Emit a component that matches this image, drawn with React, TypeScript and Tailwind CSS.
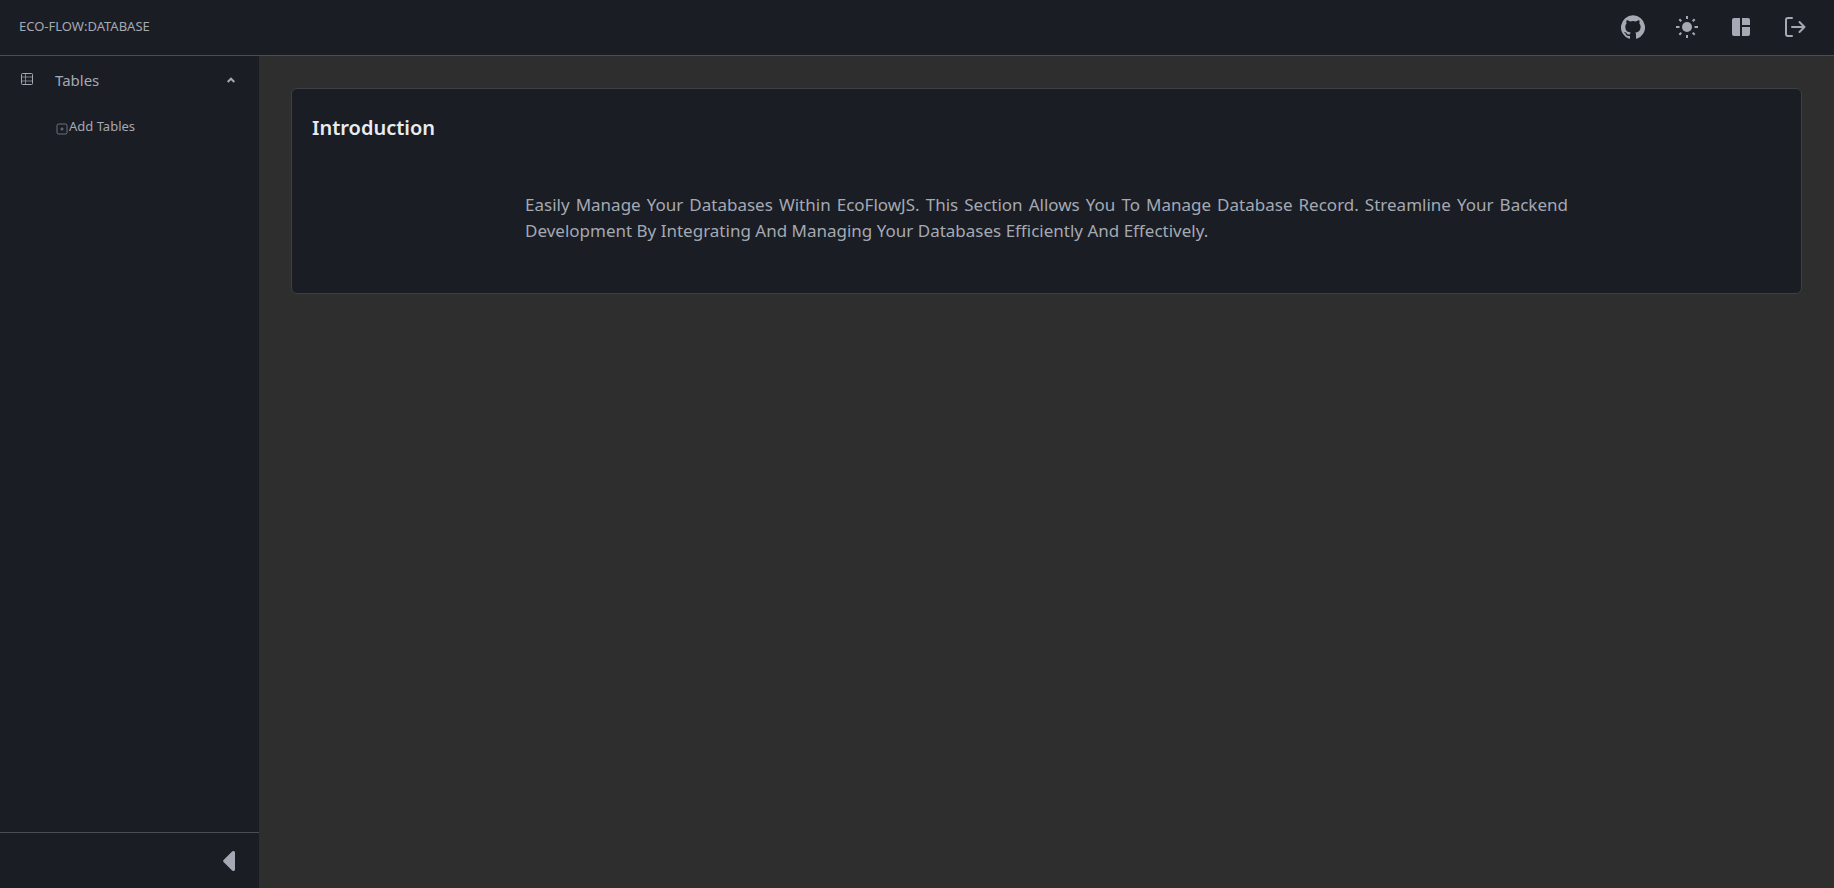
import { useState } from "react";
import type { ReactNode } from "react";

function GithubIcon() {
  return (
    <svg viewBox="0 0 24 24" className="size-6" fill="currentColor" aria-hidden="true">
      <path d="M12 .3a12 12 0 0 0-3.8 23.4c.6.1.8-.3.8-.6v-2.2c-3.3.7-4-1.4-4-1.4-.6-1.4-1.4-1.8-1.4-1.8-1-.7.1-.7.1-.7 1.2.1 1.9 1.2 1.9 1.2 1 1.8 2.8 1.3 3.5 1 0-.8.4-1.3.7-1.6-2.7-.3-5.500-1.300-5.500-6 0-1.200.5-2.300 1.300-3.100-.2-.4-.6-1.600 0-3.200 0 0 1-.3 3.400 1.200a11.500 11.500 0 0 1 6 0c2.300-1.500 3.300-1.200 3.300-1.200.6 1.600.2 2.800 0 3.200.9.8 1.300 1.900 1.300 3.200 0 4.600-2.800 5.600-5.500 5.900.5.4.9 1 .9 2.200v3.300c0 .3.1.7.8.6A12 12 0 0 0 12 .3" />
    </svg>
  );
}

function SunIcon() {
  return (
    <svg viewBox="0 0 24 24" className="size-6" fill="none" stroke="currentColor" strokeWidth="2" aria-hidden="true">
      <circle cx="12" cy="12" r="5" fill="currentColor" stroke="none" />
      <path d="M12 1v3M12 20v3M1 12h3.500M19.500 12H23M4.300 4.300l2 2M17.700 17.700l2 2M19.700 4.300l-2 2M6.300 17.700l-2 2" />
    </svg>
  );
}

function LayoutIcon() {
  return (
    <svg viewBox="0 0 24 24" className="size-6" fill="currentColor" aria-hidden="true">
      <path d="M11 21H5a2 2 0 0 1-2-2V5a2 2 0 0 1 2-2h6zM13 3h6a2 2 0 0 1 2 2v5h-8zM13 12h8v7a2 2 0 0 1-2 2h-6z" />
    </svg>
  );
}

function LogoutIcon() {
  return (
    <svg viewBox="0 0 24 24" className="size-6" fill="none" stroke="currentColor" strokeWidth="2" strokeLinecap="round" strokeLinejoin="round" aria-hidden="true">
      <path d="M9 3H5a2 2 0 0 0-2 2v14a2 2 0 0 0 2 2h4M9 12h12.500M16.500 7l5 5-5 5" />
    </svg>
  );
}

function TableIcon() {
  return (
    <svg viewBox="0 0 12 12" className="size-3" fill="none" stroke="currentColor" aria-hidden="true">
      <rect x=".5" y=".5" width="11" height="11" rx="1" />
      <path d="M4.500 .5v11M.5 4h11M.5 8h11" strokeOpacity=".7" />
    </svg>
  );
}

function AddBoxIcon() {
  return (
    <svg viewBox="0 0 12 12" className="size-3" fill="none" stroke="currentColor" aria-hidden="true">
      <rect x="1" y="1" width="10" height="10" rx="1.500" strokeOpacity=".6" />
      <path d="M6 4.300v3.400M4.300 6h3.400" strokeOpacity=".6" />
    </svg>
  );
}

function HeaderButton({ label, children }: { label: string; children: ReactNode }) {
  return (
    <button type="button" aria-label={label} className="flex size-6 items-center justify-center">
      {children}
    </button>
  );
}

export default function App() {
  const [open, setOpen] = useState(true);
  return (
    <div className="flex min-h-screen flex-col bg-[#2e2e2e] font-['Noto_Sans','Open_Sans',sans-serif] text-[#a4a9b3]">
      <header className="flex h-14 items-center justify-between border-b border-[#4b4d52] bg-[#1a1d24] pr-[27px] pb-px pl-[19px]">
        <a href="#home" className="text-[13px]">ECO-FLOW:DATABASE</a>
        <div className="flex items-center gap-[30px]">
          <HeaderButton label="GitHub"><GithubIcon /></HeaderButton>
          <HeaderButton label="Light theme"><SunIcon /></HeaderButton>
          <HeaderButton label="Dashboard"><LayoutIcon /></HeaderButton>
          <HeaderButton label="Log out"><LogoutIcon /></HeaderButton>
        </div>
      </header>
      <div className="flex flex-1">
        <aside className="flex w-[259px] shrink-0 flex-col bg-[#1a1d24]">
          <nav className="flex-1">
            <button
              type="button"
              aria-expanded={open}
              onClick={() => setOpen(!open)}
              className="flex h-12 w-full items-center pr-6 pl-5 text-left text-[15px]"
            >
              <span className="mb-0.5 w-[35px] pl-px"><TableIcon /></span>
              <span className="flex-1">Tables</span>
              <svg viewBox="0 0 8 6" className="h-[6px] w-2" fill="none" stroke="currentColor" strokeWidth="2" aria-hidden="true">
                <path d="M.7 5L4 1.700 7.300 5" />
              </svg>
            </button>
            {open && (
              <a href="#add" className="flex h-[46px] items-center pl-14 text-[13px]">
                <span className="mt-1"><AddBoxIcon /></span>
                <span className="pl-px">Add Tables</span>
              </a>
            )}
          </nav>
          <div className="flex h-14 items-center justify-end border-t border-[#4b4d52] pr-6">
            <button type="button" aria-label="Collapse sidebar">
              <svg viewBox="0 0 12 20" className="h-5 w-3" fill="currentColor" aria-hidden="true">
                <path d="M12 1.500v17c0 1.500-1.800 2-2.900 1L.8 11.300a1.800 1.800 0 0 1 0-2.600L9.100.5C10.200-.5 12 0 12 1.500z" />
              </svg>
            </button>
          </div>
        </aside>
        <main className="min-w-0 flex-1 p-8">
          <section className="rounded-md border border-[#3c3f43] bg-[#1a1d24] px-5 pt-5 pb-[49px]">
            <h1 className="text-xl leading-[38px] font-semibold text-[#e9ebf0]">Introduction</h1>
            <p className="mx-auto mt-[45px] w-[71%] text-justify text-[17px] leading-[26px]">
              Easily Manage Your Databases Within EcoFlowJS. This Section Allows You To Manage Database Record. Streamline Your
              Backend Development By Integrating And Managing Your Databases Efficiently And Effectively.
            </p>
          </section>
        </main>
      </div>
    </div>
  );
}
